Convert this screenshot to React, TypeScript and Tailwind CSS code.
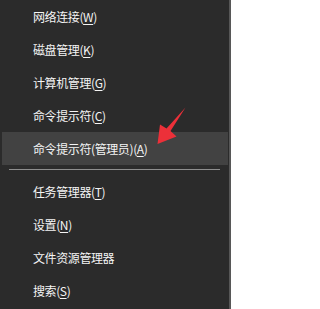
import React from "react";

type Item = { label: string; acc?: string; active?: boolean };

const TOP: Item[] = [
  { label: "网络连接", acc: "W" },
  { label: "磁盘管理", acc: "K" },
  { label: "计算机管理", acc: "G" },
  { label: "命令提示符", acc: "C" },
  { label: "命令提示符(管理员)", acc: "A", active: true },
];

const BOTTOM: Item[] = [
  { label: "任务管理器", acc: "T" },
  { label: "设置", acc: "N" },
  { label: "文件资源管理器" },
  { label: "搜索", acc: "S" },
];

function MenuRow({ label, acc, active }: Item) {
  return (
    <div
      className={`flex h-[33px] items-center ml-[2px] mr-px pl-[31px] text-[12px] tracking-[-0.4px] text-[#f4f4f4] ${
        active ? "bg-[#424242]" : ""
      }`}
    >
      <span>{label}</span>
      {acc && (
        <span>
          (<span className="underline underline-offset-2">{acc}</span>)
        </span>
      )}
    </div>
  );
}

export default function App() {
  return (
    <div
      className="relative w-[231px] h-[309px] overflow-hidden bg-[#2b2b2b] border-r-2 border-[#575757]"
      style={{ fontFamily: '"Microsoft YaHei", "Noto Sans CJK SC", sans-serif' }}
    >
      {TOP.map((it) => (
        <MenuRow key={it.label} {...it} />
      ))}
      <div className="ml-[9px] w-[211px] h-px mt-[4px] mb-[5px] bg-[#8e8e8e]" />
      {BOTTOM.map((it) => (
        <MenuRow key={it.label} {...it} />
      ))}

      {/* red annotation arrow */}
      <svg className="absolute left-0 top-0 pointer-events-none" width="231" height="309" viewBox="0 0 231 309">
        <polygon
          points="185.5,107.5 170.5,131 176.5,136.5 157.5,144 160,124.5 166.5,128.5"
          fill="#ec3039"
        />
      </svg>
    </div>
  );
}
